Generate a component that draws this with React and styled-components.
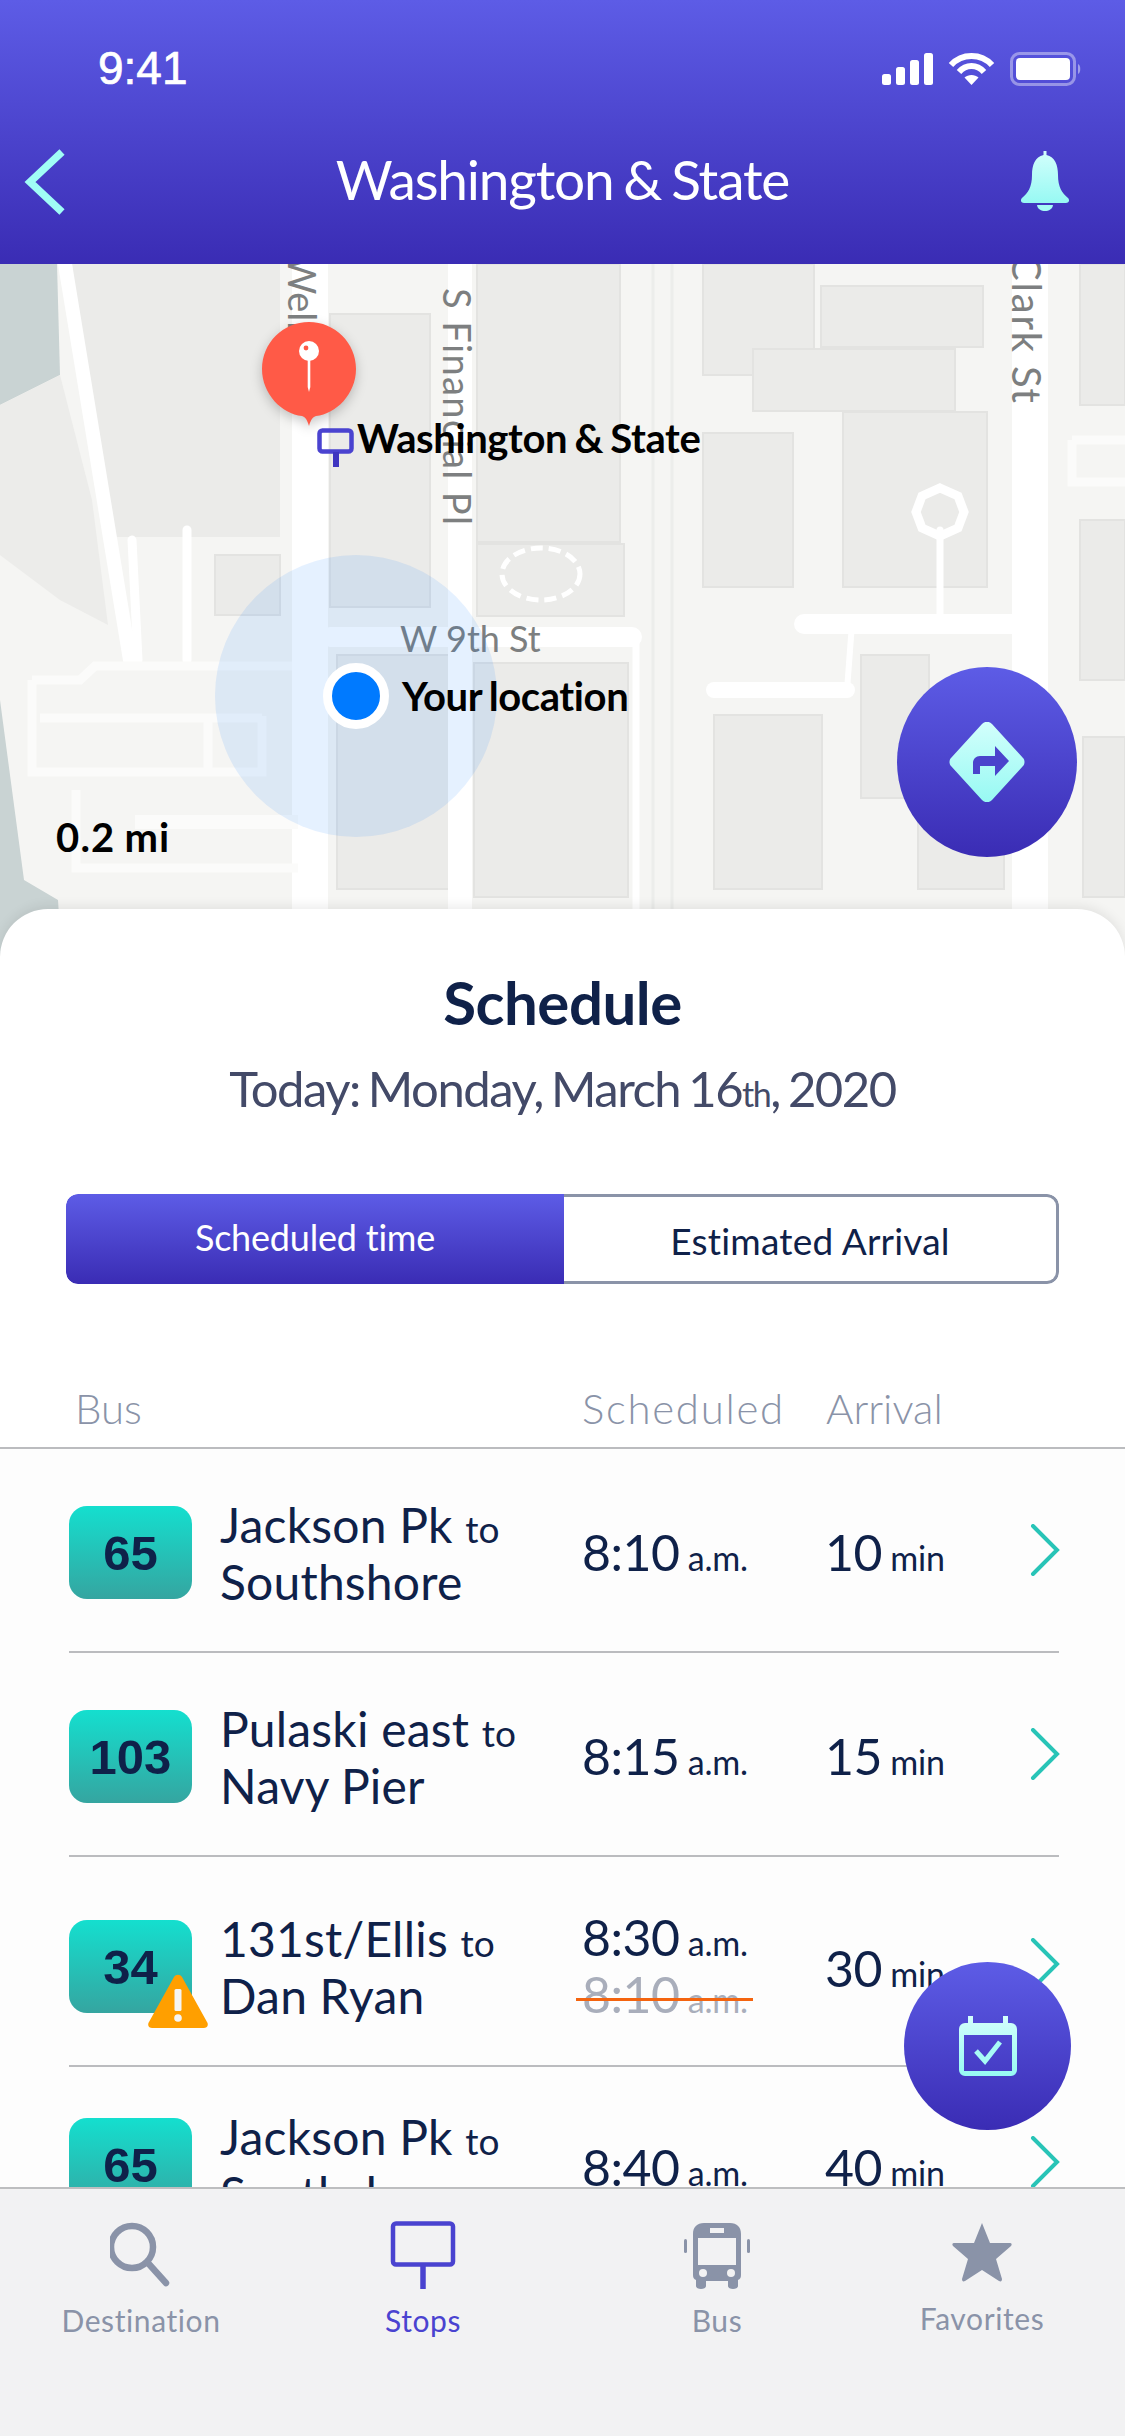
import React from "react";
import styled, { createGlobalStyle } from "styled-components";

const NAVY = "#0f2149";
const MUTED = "#8a93a8";
const INDIGO = "#4a43d0";
const HEADER_GRADIENT = "linear-gradient(180deg, #5d5ce6 0%, #3a2cb4 100%)";

const buildings = [
  [330, 314, 100, 293],
  [477, 264, 143, 278],
  [477, 544, 147, 72],
  [703, 264, 111, 111],
  [821, 286, 162, 61],
  [753, 349, 202, 62],
  [703, 433, 90, 154],
  [843, 412, 144, 175],
  [1080, 264, 45, 141],
  [1080, 520, 45, 160],
  [1083, 737, 42, 160],
  [474, 663, 154, 234],
  [337, 655, 122, 234],
  [714, 715, 108, 174],
  [861, 655, 68, 143],
  [918, 737, 86, 152],
  [215, 555, 65, 60],
];

const roads = [
  [65, 264, 130, 660, 14],
  [310, 264, 310, 910, 36],
  [460, 264, 460, 910, 24],
  [1030, 264, 1030, 910, 36],
  [330, 637, 632, 637, 20],
  [804, 624, 1012, 624, 20],
  [714, 690, 847, 690, 16],
  [847, 690, 852, 624, 6],
  [636, 637, 636, 910, 7],
  [940, 530, 940, 624, 7],
  [132, 540, 138, 660, 9],
  [187, 530, 187, 660, 9],
];

const schedule = [
  { id: "65", from: "Jackson Pk", to: "Southshore", time: "8:10", eta: "10", top: 57, height: 204, timeAt: 18, etaAt: 18 },
  { id: "103", from: "Pulaski east", to: "Navy Pier", time: "8:15", eta: "15", top: 57, height: 204, timeAt: 18, etaAt: 18 },
  { id: "34", from: "131st/Ellis", to: "Dan Ryan", time: "8:30", old: "8:10", eta: "30", warn: true, top: 63, height: 210, timeAt: -11, etaAt: 20 },
  { id: "65", from: "Jackson Pk", to: "Southshore", time: "8:40", eta: "40", top: 51, height: 204, timeAt: 21, etaAt: 21 },
];

const GlobalStyle = createGlobalStyle`
  html, body {
    margin: 0;
    padding: 0;
    background: #fff;
  }
  body {
    font-family: Lato, "Liberation Sans", sans-serif;
  }
`;

const Page = styled.div`
  width: 1125px;
  height: 2436px;
  display: flex;
  flex-direction: column;
  overflow: hidden;
`;

const Header = styled.header`
  height: 264px;
  flex: none;
  background: ${HEADER_GRADIENT};
  color: #fff;
  position: relative;
  z-index: 2;
`;

const StatusBar = styled.div`
  height: 136px;
  padding: 42px 43px 0 98px;
  box-sizing: border-box;
  display: flex;
  justify-content: space-between;
  align-items: flex-start;
`;

const Clock = styled.span`
  font-family: "Liberation Sans", sans-serif;
  font-size: 46px;
  line-height: 52px;
  font-weight: 400;
  -webkit-text-stroke: 0.7px #fff;
`;

const StatusIcons = styled.div`
  display: flex;
  align-items: center;
  gap: 15px;
  padding-top: 10px;
`;

const NavBar = styled.div`
  height: 92px;
  padding: 0 24px;
  display: grid;
  grid-template-columns: 1fr auto 1fr;
  align-items: center;
  box-sizing: border-box;
  svg:last-child {
    justify-self: end;
    margin-right: 31px;
  }
`;

const NavTitle = styled.h1`
  margin: 0 0 6px;
  font-size: 55px;
  font-weight: 400;
  letter-spacing: -1.2px;
  word-spacing: -3px;
`;

const MapArea = styled.section`
  height: 700px;
  flex: none;
  position: relative;
  overflow: hidden;
`;

const MapDrawing = styled.svg`
  display: block;
  width: 1125px;
  height: 700px;
`;

const MapLabel = styled.span`
  position: absolute;
  left: ${(p) => p.$x}px;
  top: ${(p) => p.$y}px;
  font-size: 40px;
  line-height: 46px;
  font-weight: 700;
  color: #000;
  white-space: nowrap;
  letter-spacing: ${(p) => p.$spacing ?? -0.4}px;
  word-spacing: -2px;
`;

const PinMark = styled.svg`
  position: absolute;
  left: 250px;
  top: 50px;
  overflow: visible;
  filter: drop-shadow(0 4px 6px rgba(0, 0, 0, 0.22));
`;

const StopMark = styled.svg`
  position: absolute;
  left: 317px;
  top: 164px;
`;

const Accuracy = styled.div`
  position: absolute;
  left: 215px;
  top: 291px;
  width: 282px;
  height: 282px;
  border-radius: 50%;
  background: rgba(0, 122, 255, 0.1);
  display: flex;
  align-items: center;
  justify-content: center;
`;

const LocationDot = styled.div`
  width: 48px;
  height: 48px;
  border: 9px solid #fff;
  border-radius: 50%;
  background: #007aff;
`;

const Fab = styled.button`
  position: absolute;
  right: ${(p) => p.$right}px;
  top: ${(p) => p.$top}px;
  width: ${(p) => p.$w}px;
  height: ${(p) => p.$h}px;
  padding: 0;
  border: 0;
  border-radius: 50%;
  background: ${HEADER_GRADIENT};
  display: flex;
  align-items: center;
  justify-content: center;
  z-index: 3;
`;

const Sheet = styled.main`
  flex: 1;
  min-height: 0;
  margin-top: -55px;
  position: relative;
  z-index: 1;
  background: #fff;
  border-radius: 48px 48px 0 0;
  box-shadow: 0 -3px 12px rgba(0, 0, 0, 0.08);
  display: flex;
  flex-direction: column;
`;

const SheetTitle = styled.h2`
  margin: 58px 0 0;
  font-size: 60px;
  line-height: 70px;
  font-weight: 700;
  letter-spacing: -0.5px;
  color: ${NAVY};
  text-align: center;
`;

const DateLine = styled.p`
  margin: 22px 0 0;
  font-size: 49px;
  line-height: 58px;
  color: #434a68;
  text-align: center;
  letter-spacing: -1.5px;
  word-spacing: -3px;
  small {
    font-size: 34px;
  }
`;

const Segments = styled.div`
  margin: 71px 66px 0;
  height: 90px;
  display: grid;
  grid-template-columns: 498px 1fr;
  box-sizing: border-box;
  border-radius: 12px;
  overflow: hidden;
`;

const Segment = styled.div`
  display: flex;
  align-items: center;
  justify-content: center;
  font-size: ${(p) => (p.$active ? 36 : 37)}px;
  letter-spacing: ${(p) => (p.$active ? -0.2 : 0.2)}px;
  box-sizing: border-box;
  color: ${(p) => (p.$active ? "#fff" : NAVY)};
  background: ${(p) => (p.$active ? HEADER_GRADIENT : "#fff")};
  border: ${(p) => (p.$active ? "0" : `3px solid ${MUTED}`)};
  border-left: 0;
  border-radius: ${(p) => (p.$active ? "12px 0 0 12px" : "0 12px 12px 0")};
  padding-top: ${(p) => (p.$active ? "0" : "2px")};
  padding-bottom: ${(p) => (p.$active ? "4px" : "0")};
`;

const ColumnHeads = styled.div`
  margin-top: 96px;
  height: 69px;
  box-sizing: border-box;
  padding-left: 75px;
  display: grid;
  grid-template-columns: 507px 244px auto;
  border-bottom: 2px solid #bbbcbf;
  font-size: 42px;
  line-height: 56px;
  font-weight: 300;
  color: ${MUTED};
`;

const HeadCell = styled.span`
  letter-spacing: ${(p) => p.$spread || 0}px;
`;

const List = styled.div`
  flex: 1;
  min-height: 0;
  position: relative;
  overflow: hidden;
  background: #fdfdfd;
`;

const Row = styled.article`
  height: ${(p) => p.$height}px;
  box-sizing: border-box;
  margin: 0 66px 0 69px;
  padding-top: ${(p) => p.$top}px;
  border-bottom: 2px solid #bbbcbf;
  display: grid;
  grid-template-columns: 123px 390px 243px 205px 29px;
  align-items: start;
  &:last-of-type {
    border-bottom: 0;
  }
`;

const Badge = styled.div`
  height: 93px;
  position: relative;
  border-radius: 18px;
  background: linear-gradient(180deg, #14dfcf 0%, #35a5a0 100%);
  display: flex;
  align-items: center;
  justify-content: center;
  font-family: "Liberation Sans", sans-serif;
  font-size: 49px;
  font-weight: 700;
  color: ${NAVY};
`;

const WarnMark = styled.svg`
  position: absolute;
  left: 78px;
  top: 54px;
`;

const Route = styled.div`
  margin-left: 28px;
  margin-top: -10px;
  font-size: 48px;
  line-height: 57px;
  letter-spacing: 0.2px;
  color: ${NAVY};
  white-space: nowrap;
  small {
    font-size: 37px;
    line-height: 1;
  }
`;

const TimeCell = styled.div`
  display: flex;
  flex-direction: column;
  margin-top: ${(p) => p.$offset}px;
  font-size: 50px;
  line-height: 57px;
  color: ${NAVY};
  letter-spacing: -0.5px;
  word-spacing: -4px;
  white-space: nowrap;
  small {
    font-size: 34px;
    line-height: 1;
    letter-spacing: -0.2px;
  }
`;

const OldTime = styled.span`
  position: relative;
  color: #a9aebb;
  &::after {
    content: "";
    position: absolute;
    left: -6px;
    width: 177px;
    top: 32px;
    height: 3px;
    background: #f4640f;
  }
`;

const Chevron = styled.svg`
  margin-top: 18px;
`;

const TabBar = styled.nav`
  height: 249px;
  flex: none;
  box-sizing: border-box;
  border-top: 2px solid #bdbec0;
  background: #f2f2f3;
  display: grid;
  grid-template-columns: 282px 282px 306px 224px;
  position: relative;
  z-index: 2;
`;

const Tab = styled.div`
  display: flex;
  flex-direction: column;
  align-items: center;
  padding-top: 32px;
  font-size: 30px;
  letter-spacing: 0.6px;
  color: ${(p) => (p.$active ? INDIGO : MUTED)};
`;

const TabIcon = styled.svg`
  display: block;
  height: 70px;
  margin-bottom: ${(p) => p.$gap || 11}px;
`;

const BrightGradient = ({ id }) => (
  <linearGradient id={id} x1="0" y1="0" x2="0" y2="1">
    <stop offset="0" stopColor="#d3fffc" />
    <stop offset="1" stopColor="#97f9f3" />
  </linearGradient>
);

const SignalIcon = () => (
  <svg width="51" height="32" viewBox="0 0 51 32" fill="#fff">
    <rect x="0" y="21" width="9" height="11" rx="2.5" />
    <rect x="14" y="14" width="9" height="18" rx="2.5" />
    <rect x="28" y="7" width="9" height="25" rx="2.5" />
    <rect x="42" y="0" width="9" height="32" rx="2.5" />
  </svg>
);

const WifiIcon = () => (
  <svg width="47" height="34" viewBox="0 0 47 34" fill="none" stroke="#fff" strokeWidth="6">
    <path d="M3 13 C14 1 33 1 44 13" />
    <path d="M11 20 C18 12 29 12 36 20" />
    <path d="M23.5 33 L16.5 25.5 C20 22 27 22 30.5 25.5 Z" fill="#fff" stroke="none" />
  </svg>
);

const BatteryIcon = () => (
  <svg width="72" height="34" viewBox="0 0 72 34">
    <rect x="1.5" y="1.5" width="63" height="31" rx="8" fill="none" stroke="#fff" strokeOpacity="0.4" strokeWidth="3" />
    <rect x="6" y="6" width="54" height="22" rx="4" fill="#fff" />
    <path d="M68 12 C71 13 71 21 68 22 Z" fill="#fff" fillOpacity="0.45" />
  </svg>
);

const BackIcon = () => (
  <svg width="42" height="66" viewBox="0 0 42 66" fill="none">
    <path d="M38 3 L6 33 L38 63" stroke="#a0fdf6" strokeWidth="7.5" />
  </svg>
);

const BellIcon = () => (
  <svg width="50" height="62" viewBox="0 0 50 62">
    <defs>
      <BrightGradient id="bellFill" />
    </defs>
    <path
      d="M23.5 0 h3 v4 C35 6 38 14 38 24 C38 36 42 42 48 47 C50 49 49 52 46 52 H4 C1 52 0 49 2 47 C8 42 12 36 12 24 C12 14 15 6 23.5 4 Z"
      fill="url(#bellFill)"
    />
    <path d="M17 54 H33 C32 62 18 62 17 54 Z" fill="#a6fbf5" />
  </svg>
);

const MapBackdrop = () => (
  <MapDrawing viewBox="0 264 1125 700">
    <rect x="0" y="264" width="1125" height="700" fill="#f5f5f3" />
    <path d="M0 264 H57 L60 375 L0 405 Z" fill="#c9d3d3" />
    <path d="M0 700 L24 880 L58 900 L62 964 H0 Z" fill="#c9d3d3" />
    <path d="M0 405 L60 375 L92 500 L108 625 L60 600 L0 555 Z" fill="#ececea" />
    <path d="M72 264 H280 V537 H112 L90 440 Z" fill="#ebebe9" />
    {buildings.map(([x, y, w, h]) => (
      <rect key={`${x}-${y}`} x={x} y={y} width={w} height={h} fill="#ebebe9" stroke="#e3e3e1" strokeWidth="2" />
    ))}
    <path d="M653 264 V910 M672 264 V910" stroke="#ecedeb" strokeWidth="3" />
    {roads.map(([x1, y1, x2, y2, w]) => (
      <line key={`${x1}-${y1}-${x2}`} x1={x1} y1={y1} x2={x2} y2={y2} stroke="#fff" strokeWidth={w} strokeLinecap="round" />
    ))}
    <g fill="none" stroke="#fbfbfa" strokeWidth="9">
      <path d="M32 680 H80 L95 666 H292" />
      <path d="M32 680 V772 H262 V716" />
      <path d="M40 718 H262" />
      <path d="M208 718 V772" />
      <path d="M135 822 H298" strokeWidth="14" />
      <path d="M76 790 V868 H298" />
      <path d="M1072 440 H1125 M1072 440 V482 H1125" />
    </g>
    <path d="M940 488 L958 496 L964 512 L958 528 L940 536 L922 528 L916 512 L922 496 Z" fill="none" stroke="#fff" strokeWidth="9" />
    <ellipse cx="541" cy="574" rx="39" ry="26" fill="none" stroke="#fff" strokeWidth="5" strokeDasharray="12 6" />
    <g fill="#7d7f80" fontFamily="Lato, sans-serif" fontSize="38">
      <text transform="translate(288 255) rotate(90)">Well</text>
      <text transform="translate(443 288) rotate(90)" letterSpacing="1.4">S Financial Pl</text>
      <text transform="translate(1012 254) rotate(90)" letterSpacing="1.8" fontSize="40">Clark St</text>
      <text x="400" y="652" fontSize="36">W 9th St</text>
    </g>
  </MapDrawing>
);

const Pin = () => (
  <PinMark width="118" height="126" viewBox="0 0 118 126">
    <path d="M59 8 C33 8 12 29 12 55 C12 80 32 100 52 102 C55 103 57 105 59 112 C61 105 63 103 66 102 C86 100 106 80 106 55 C106 29 85 8 59 8 Z" fill="#ff5a47" />
    <circle cx="59" cy="37" r="10" fill="#fff" />
    <circle cx="56" cy="34" r="2.4" fill="#ff5a47" />
    <path d="M57.7 45 h2.6 v28 l-1.3 5 l-1.3 -5 Z" fill="#fff" />
  </PinMark>
);

const StopSign = () => (
  <StopMark width="38" height="40" viewBox="0 0 38 40">
    <rect x="2.5" y="2.5" width="32" height="21" rx="3" fill="none" stroke={INDIGO} strokeWidth="4.5" />
    <rect x="16" y="24" width="6" height="15" fill="#3f35c0" />
  </StopMark>
);

const TurnIcon = () => (
  <svg width="76" height="80" viewBox="0 0 76 80">
    <defs>
      <BrightGradient id="turnFill" />
    </defs>
    <path
      d="M33 2 C36 -1 40 -1 43 2 L74 36 C76 38 76 42 74 44 L43 78 C40 81 36 81 33 78 L2 44 C0 42 0 38 2 36 Z"
      fill="url(#turnFill)"
    />
    <path d="M46 24 L60 39 L46 54 V44 H31 V52 H24 V41 C24 37 27 34 31 34 H46 Z" fill="#4b43cc" />
  </svg>
);

const CalendarIcon = () => (
  <svg width="58" height="60" viewBox="0 0 58 60">
    <defs>
      <BrightGradient id="calFill" />
    </defs>
    <path
      fillRule="evenodd"
      d="M9 0 h5 v7 h30 V0 h5 v7 h3 a6 6 0 0 1 6 6 V54 a6 6 0 0 1 -6 6 H6 a6 6 0 0 1 -6 -6 V13 a6 6 0 0 1 6 -6 h3 Z M5 19 V55 H53 V19 Z"
      fill="url(#calFill)"
    />
    <path d="M17 35 L26 45 L41 26" fill="none" stroke="#a8fbf6" strokeWidth="5" />
  </svg>
);

const RowChevron = () => (
  <Chevron width="30" height="52" viewBox="0 0 30 52" fill="none">
    <path d="M3 2 L27 26 L3 50" stroke="#28c4b7" strokeWidth="4" strokeLinecap="round" />
  </Chevron>
);

const WarnIcon = () => (
  <WarnMark width="62" height="54" viewBox="0 0 62 54">
    <path d="M27 3 C29 0 33 0 35 3 L60 48 C62 51 60 54 57 54 H5 C2 54 0 51 2 48 Z" fill="#ff9f00" />
    <rect x="27.5" y="15" width="7" height="22" rx="1.5" fill="#f5f5f5" />
    <circle cx="31" cy="44" r="3.8" fill="#f5f5f5" />
  </WarnMark>
);

const SearchIcon = () => (
  <TabIcon width="62" viewBox="0 0 62 70" fill="none" stroke={MUTED}>
    <circle cx="22" cy="26" r="21" strokeWidth="6.5" />
    <path d="M38 42 L56 62" strokeWidth="6.5" strokeLinecap="round" />
  </TabIcon>
);

const StopsIcon = () => (
  <TabIcon width="66" viewBox="0 0 66 70" fill="none" stroke={INDIGO}>
    <rect x="3" y="2.5" width="60" height="41" rx="3" strokeWidth="4.5" />
    <path d="M33 44 V68" strokeWidth="5.5" />
  </TabIcon>
);

const BusIcon = () => (
  <TabIcon width="66" viewBox="0 0 66 70">
    <path
      fillRule="evenodd"
      d="M20 2 H46 C53 2 57 6 57 13 V54 C57 57 56 58 54 59 V65 C54 69 44 69 44 65 V60 H22 V65 C22 69 12 69 12 65 V59 C10 58 9 57 9 54 V13 C9 6 13 2 20 2 Z M14 17 V44 H52 V17 Z M26 7 V12 H40 V7 Z"
      fill={MUTED}
    />
    <circle cx="19" cy="52" r="4" fill="#f2f2f3" />
    <circle cx="47" cy="52" r="4" fill="#f2f2f3" />
    <rect x="0" y="18" width="3" height="14" rx="1.5" fill={MUTED} />
    <rect x="63" y="18" width="3" height="14" rx="1.5" fill={MUTED} />
  </TabIcon>
);

const StarIcon = () => (
  <TabIcon $gap={9} width="62" viewBox="0 0 62 70">
    <path
      d="M31 2 L39 22 L59 22 C61 22 61 24 60 25 L45 38 L51 58 C51 60 50 61 48 60 L31 49 L14 60 C12 61 11 60 11 58 L17 38 L2 25 C1 24 1 22 3 22 L23 22 Z"
      fill={MUTED}
    />
  </TabIcon>
);

const App = () => (
  <Page>
    <GlobalStyle />
    <Header>
      <StatusBar>
        <Clock>9:41</Clock>
        <StatusIcons>
          <SignalIcon />
          <WifiIcon />
          <BatteryIcon />
        </StatusIcons>
      </StatusBar>
      <NavBar>
        <BackIcon />
        <NavTitle>Washington &amp; State</NavTitle>
        <BellIcon />
      </NavBar>
    </Header>

    <MapArea>
      <MapBackdrop />
      <Pin />
      <StopSign />
      <MapLabel $x={357} $y={151}>Washington &amp; State</MapLabel>
      <Accuracy>
        <LocationDot />
      </Accuracy>
      <MapLabel $x={402} $y={409}>Your location</MapLabel>
      <MapLabel $x={56} $y={550} $spacing={1.2}>0.2 mi</MapLabel>
      <Fab $right={48} $top={403} $w={180} $h={190}>
        <TurnIcon />
      </Fab>
    </MapArea>

    <Sheet>
      <SheetTitle>Schedule</SheetTitle>
      <DateLine>
        Today: Monday, March 16<small>th</small>, 2020
      </DateLine>
      <Segments>
        <Segment $active>Scheduled time</Segment>
        <Segment>Estimated Arrival</Segment>
      </Segments>
      <ColumnHeads>
        <HeadCell>Bus</HeadCell>
        <HeadCell $spread={1.7}>Scheduled</HeadCell>
        <HeadCell>Arrival</HeadCell>
      </ColumnHeads>
      <List>
        {schedule.map((item) => (
          <Row key={item.time} $top={item.top} $height={item.height}>
            <Badge>
              {item.id}
              {item.warn && <WarnIcon />}
            </Badge>
            <Route>
              {item.from} <small>to</small>
              <br />
              {item.to}
            </Route>
            <TimeCell $offset={item.timeAt}>
              <span>
                {item.time} <small>a.m.</small>
              </span>
              {item.old && (
                <OldTime>
                  {item.old} <small>a.m.</small>
                </OldTime>
              )}
            </TimeCell>
            <TimeCell $offset={item.etaAt}>
              <span>
                {item.eta} <small>min</small>
              </span>
            </TimeCell>
            <RowChevron />
          </Row>
        ))}
        <Fab $right={54} $top={513} $w={167} $h={168}>
          <CalendarIcon />
        </Fab>
      </List>
    </Sheet>

    <TabBar>
      <Tab>
        <SearchIcon />
        Destination
      </Tab>
      <Tab $active>
        <StopsIcon />
        Stops
      </Tab>
      <Tab>
        <BusIcon />
        Bus
      </Tab>
      <Tab>
        <StarIcon />
        Favorites
      </Tab>
    </TabBar>
  </Page>
);

export default App;
